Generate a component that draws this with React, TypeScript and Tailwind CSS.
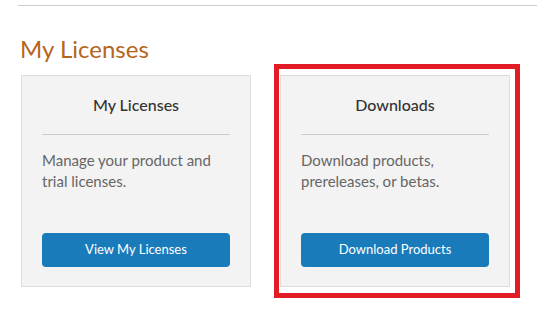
import React from "react"

const font = { fontFamily: "Lato, 'Noto Sans', sans-serif" }

type Card = { title: string; text: string[]; button: string }

const cards: Card[] = [
  { title: "My Licenses", text: ["Manage your product and", "trial licenses."], button: "View My Licenses" },
  { title: "Downloads", text: ["Download products,", "prereleases, or betas."], button: "Download Products" },
]

function LicenseCard({ card }: { card: Card }) {
  return (
    <div className="w-[230px] h-[212px] bg-[#f3f3f3] border border-[#dddddd] px-[20px] flex flex-col">
      <h3 className="pt-[17px] h-[59px] text-center text-[16px] font-medium text-[#333333] leading-[24px] border-b border-[#cccccc]">
        {card.title}
      </h3>
      <p className="mt-[15px] text-[15px] leading-[21px] text-[#666666]">
        {card.text.map((line) => (
          <span key={line} className="block">
            {line}
          </span>
        ))}
      </p>
      <button className="mt-auto mb-[19px] h-[34px] w-full rounded-[4px] bg-[#1a7bbb] text-white text-[13px]">
        {card.button}
      </button>
    </div>
  )
}

export default function App() {
  return (
    <div className="relative w-[537px] h-[332px] bg-white overflow-hidden" style={font}>
      <div className="ml-[18px] mt-[5px] border-t border-[#cccccc]" />
      <h2 className="ml-[20px] mt-[28px] text-[24px] leading-[30px] text-[#b5651d]">My Licenses</h2>
      <div className="ml-[21px] mt-[11px] flex gap-[29px]">
        {cards.map((c) => (
          <LicenseCard key={c.title} card={c} />
        ))}
      </div>
      {/* highlight around the downloads card */}
      <div className="absolute left-[274px] top-[64px] w-[246px] h-[234px] border-[5px] border-[#e21c24]" />
    </div>
  )
}
